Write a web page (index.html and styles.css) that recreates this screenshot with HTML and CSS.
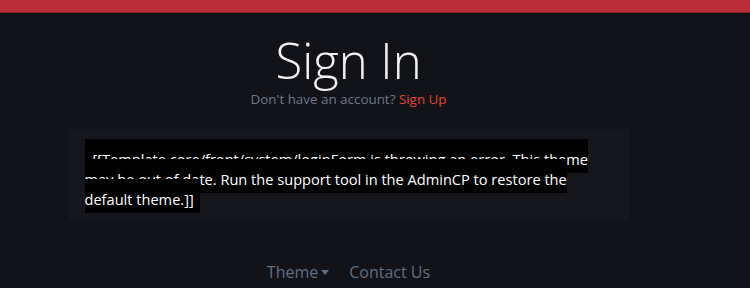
FILE: index.html
```html
<!DOCTYPE html>
<html lang="en">
<head>
<meta charset="utf-8">
<title>Sign In</title>
<link rel="stylesheet" href="styles.css">
</head>
<body>
<div class="topbar"></div>
<main class="page">
  <h1 class="title">Sign In</h1>
  <p class="subtitle">Don't have an account? <a class="signup" href="#">Sign Up</a></p>
  <div class="panel">
    <div class="panel-body"><span class="error">[[Template core/front/system/loginForm is throwing an error. This theme may be out of date. Run the support tool in the AdminCP to restore the default theme.]]</span></div>
  </div>
  <nav class="footer">
    <a class="footer-link" href="#">Theme<span class="caret"></span></a>
    <a class="footer-link" href="#">Contact Us</a>
  </nav>
</main>
</body>
</html>
```
FILE: styles.css
```css
html, body {
  margin: 0;
  padding: 0;
  background: #121318;
  font-family: "Open Sans", "Noto Sans", sans-serif;
  overflow: hidden;
}

.topbar {
  height: 12px;
  background: #b92d3a;
  border-bottom: 1px solid #8c1f2a;
}

.page {
  width: 697px;
  display: flex;
  flex-direction: column;
  align-items: center;
}

.title {
  margin: 17px 0 0;
  font-size: 49px;
  font-weight: 300;
  line-height: 60px;
  color: #f2f2f2;
}

.subtitle {
  margin: 0;
  font-size: 13.4px;
  line-height: 18px;
  color: #6a788b;
}

.signup {
  color: #e0452b;
  text-decoration: none;
}

.panel {
  margin-top: 21px;
  width: 560px;
  box-sizing: border-box;
  background: #16171c;
  padding: 20px 16px 12px;
}

.panel-body {
  font-size: 14.6px;
  line-height: 20px;
  color: #ffffff;
}

.error {
  background: #000000;
  padding: 10px 6px 4px 8px;
}

.footer {
  margin-top: 40px;
  display: flex;
  gap: 20px;
  font-size: 16px;
  line-height: 22px;
}

.footer-link {
  color: #5f6f83;
  text-decoration: none;
  display: flex;
  align-items: center;
}

.caret {
  display: inline-block;
  width: 0;
  height: 0;
  margin-left: 3px;
  margin-top: 1px;
  border-left: 4px solid transparent;
  border-right: 4px solid transparent;
  border-top: 5px solid #5f6f83;
}
```
